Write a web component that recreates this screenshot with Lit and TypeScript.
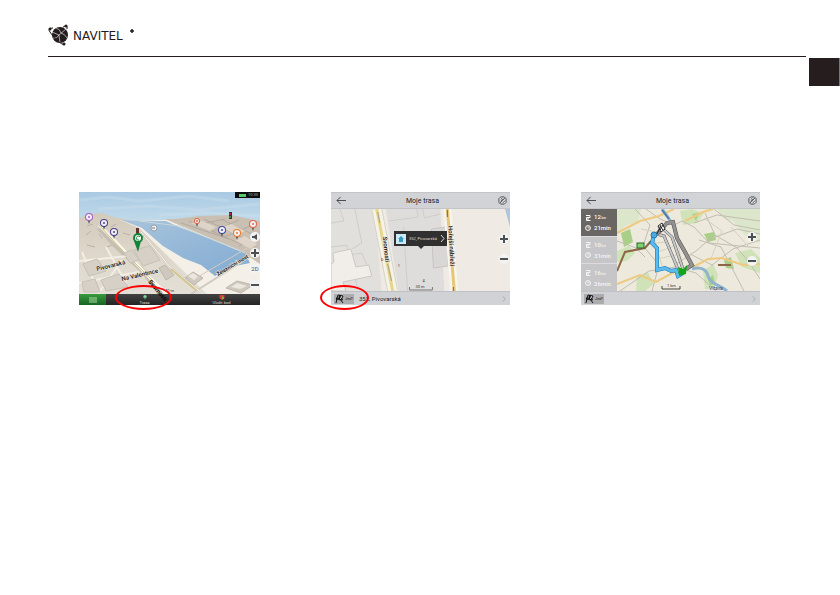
import { LitElement, html, svg, css } from "lit";
import { customElement } from "lit/decorators.js";

const pin = (x: number, y: number, color: string, r = 3) => svg`
  <path d="M${x - 1} ${y + r - 1}L${x} ${y + r + 3}L${x + 1} ${y + r - 1}Z" fill="#333"/>
  <circle cx=${x} cy=${y} r=${r} fill=${color}/>
  <circle cx=${x} cy=${y} r=${r - 1} fill="#f3f0f5"/>
  <path d="M${x - 1} ${y}h2" stroke=${color} stroke-width="1.5"/>`;

const cityMap = svg`
  <svg class="map" viewBox="0 0 181 102" preserveAspectRatio="none" aria-hidden="true">
    <defs>
      <linearGradient id="sky" x2="0" y2="1"><stop stop-color="#a9c9e3"/><stop offset=".6" stop-color="#bfd9e9"/><stop offset="1" stop-color="#dfe9ec"/></linearGradient>
      <linearGradient id="land" x2="0" y2="1"><stop stop-color="#d3cabb"/><stop offset=".6" stop-color="#dfd9cd"/><stop offset="1" stop-color="#e3dfd6"/></linearGradient>
      <linearGradient id="river" x2="1" y2="1"><stop stop-color="#a8c4dc"/><stop offset="1" stop-color="#82abd2"/></linearGradient>
    </defs>
    <rect width="181" height="45" fill="url(#sky)"/>
    <path d="M0 8L30 5L60 9L110 4L150 9M20 17L70 14L120 18L180 12M80 23L130 21L181 24" stroke="#d3e3ed" stroke-width="3" fill="none" opacity=".3"/>
    <path d="M0 26L12 22L23 21L38 26L60 29L181 30V102H0Z" fill="url(#land)"/>
    <path d="M41 28L90 28L100 32L168 58L181 67V102H128L60 36Z" fill="#f4f0e7"/>
    <path d="M86 27L96 27L120 24L152 23L181 29V72L160 58L100 33Z" fill="#c9c0b3"/>
    <path d="M102 31L150 47M110 29L162 52M125 27L172 50M142 27L181 46M117 33L146 27M133 40L160 28M145 45L176 32M160 54L181 42" stroke="#b3a99d" fill="none"/>
    <path d="M112 31L123 29L137 35L131 39ZM142 35L153 32L166 39L157 43ZM156 48L166 44L178 52L171 57Z" fill="#ded5c8"/>
    <path d="M42 28L87 29L100 35L130 46L166 61L171 71L151 75L136 84L122 73L104 66L84 54L63 36Z" fill="url(#river)"/>
    <path d="M60 29L100 34L166 61" stroke="#cad8dc" fill="none"/>
    <path d="M20 36L38 55L63 78L82 102" stroke="#c4bfb3" stroke-width="5" fill="none"/>
    <path d="M20 33L38 51L71 86L88 102" stroke="#faf7eb" stroke-width="3" fill="none"/>
    <path d="M20 33L43 58L76 91" stroke="#cfbd86" fill="none"/>
    <path d="M62 40L91 75L124 102M112 102L169 66L181 60" stroke="#d0cbc0" stroke-width="2" fill="none"/>
    <path d="M62 40L91 75L124 102" stroke="#faf6ec" fill="none"/>
    <path d="M92 77L117 98" stroke="#d4c58f" stroke-width="2" fill="none"/>
    <path d="M0 69L50 64M0 91L60 80M3 60L20 102M27 55L47 91M43 68L19 102" stroke="#f2eee4" stroke-width="2" fill="none"/>
    <path d="M4 72L18 67L27 79L10 84ZM22 88L40 82L49 95L27 99ZM3 90L16 87L21 100H5ZM55 58L71 54L81 68L64 74ZM45 61L53 58L60 68L51 71Z" fill="#d6d0c7" stroke="#c6c0b6"/>
    <path d="M106 86L114 80L124 86L115 93ZM147 96L158 89L174 93L162 101ZM80 76L86 73L95 83L87 88Z" fill="#cfc8be" stroke="#bdb7ad"/>
    <path d="M109 84L114 81L120 85L115 88ZM152 95L158 91L168 94L161 97Z" fill="#ece7dc"/>
    <path d="M7 43l5-4M20 42l3 4M32 35l5-3M8 53l8 2M28 55l5-2M44 41l7 2M60 46l5-2M8 34l6-2" stroke="#bbb2a6" fill="none"/>
    <path d="M117 86L170 55" stroke="#d0cbc1" fill="none"/>
    ${pin(10, 25, "#a65bc8", 4)}
    ${pin(25, 31, "#49408d", 4)}
    ${pin(35, 40, "#49408d", 4)}
    <circle cx="75" cy="36" r="3" fill="#eef2f3" stroke="#98a0a6"/>
    <path d="M73 36h3" stroke="#777"/>
    ${pin(118, 29, "#df6946")}
    ${pin(143, 38, "#3c4ba0", 4)}
    ${pin(158, 41, "#ed7a24", 4)}
    ${pin(174, 32, "#e5674b", 4)}
    <rect x="150" y="20" width="3" height="7" fill="#333"/><circle cx="151" cy="22" r="1" fill="#d24"/><circle cx="151" cy="25" r="1" fill="#3a4"/>
    <rect x="57" y="36" width="3" height="7" fill="#61352c"/>
    <path d="M55 49L59 60L62 49Z" fill="#15833c"/><circle cx="59" cy="46" r="5" fill="#15833c"/><circle cx="59" cy="46" r="3" fill="#fff"/><path d="M61 45A2 2 0 1 0 60 48" fill="none" stroke="#15833c"/>
    <g class="street">
      <text transform="translate(18 79) rotate(-14)">Pivovarská</text>
      <text transform="translate(43 89) rotate(-13)">Na Valentince</text>
      <text class="narrow" transform="translate(139 84) rotate(-31)">Železniční most</text>
    </g>
    <text class="scale" x="86" y="100">40 m</text>
  </svg>`;

const streetMap = svg`
  <svg class="map" viewBox="0 0 180 82" preserveAspectRatio="none" aria-hidden="true">
    <rect width="180" height="82" fill="#efebe4"/>
    <path d="M0 0H44L51 82H0Z" fill="#e2e0dc"/>
    <path d="M55 0H110L114 82H68Z" fill="#dedddb"/>
    <path d="M0 14L13 12L9 0M24 0L31 34L21 40M0 38L16 36L18 46L31 44L38 61L23 64L27 80M58 12L88 8L86 0M92 0L94 9L110 5M73 18L77 82" fill="none" stroke="#cfcdc9"/>
    <path d="M0 55L3 53L2 44L20 40L25 58L38 56L41 67L12 73L15 82H0Z" fill="#f1eeea" stroke="#cbc8c4"/>
    <path d="M101 20L116 18L118 57L103 59Z" fill="#d8d7d5" stroke="#c6c5c3"/>
    <path d="M46 0L62 82" stroke="#d7d3c9" stroke-width="11"/>
    <path d="M46 0L62 82" stroke="#f5f2e6" stroke-width="9"/>
    <path d="M46 0L62 82" stroke="#e6d58a" stroke-width="3"/>
    <path d="M47 3L49 14M57 55L61 72" stroke="#aaa38c"/>
    <path d="M117 0L124 82" stroke="#f8f5ec" stroke-width="8"/>
    <path d="M117 0L124 82" stroke="#e8c578" stroke-width="3"/>
    <path d="M117 1v7M123 78v4" stroke="#706956"/>
    <path d="M175 0H180V18Z" fill="#adc5df"/>
    <g class="street">
      <text transform="translate(52 28) rotate(84)">Svornosti</text>
      <text transform="translate(118 17) rotate(87)">Hořejší nábřeží</text>
    </g>
    <g class="scale"><text x="85" y="79">30 m</text><text x="92" y="73">4</text><text x="67" y="58">1</text><text x="50" y="52">D</text></g>
    <path d="M79 78V81H102V78" fill="none" stroke="#777"/>
  </svg>`;

const routeMap = svg`
  <svg class="map" viewBox="0 0 143 82" preserveAspectRatio="none" aria-hidden="true">
    <rect width="143" height="82" fill="#edeadd"/>
    <path d="M0 0H24L21 12L8 17L0 24ZM100 0H143V34L128 26L116 12L107 9Z" fill="#dbe6cb"/>
    <path d="M63 2L75 0L87 4L80 14L66 16ZM0 42L12 37L18 44L10 52L0 53ZM86 62L96 55L101 66L97 80H88ZM118 44L134 40L143 49V64L125 58ZM20 67L31 63L37 75L28 82H19Z" fill="#cfe2b8"/>
    <path d="M4 24L13 20L16 33L7 38ZM75 5L82 4L79 12ZM87 25L97 23L99 31L91 33ZM91 70L96 66L98 74L93 77ZM107 51L114 48L117 60L109 59Z" fill="#a9cf88"/>
    <path d="M29 0L43 10L57 16L65 12L77 18L92 34L143 39M77 14L100 6L143 12M59 55L79 42L93 30L120 20L143 25M82 31L104 38L127 82M73 45L95 56L116 40L143 31M88 4L98 26L120 39L132 53L143 70M97 0L117 16L143 21M18 0L33 16L26 37L42 56L35 82M0 32L19 39L28 48M3 82L32 62L58 58L79 64L99 82" fill="none" stroke="#c2bdb0"/>
    <path d="M24 20L44 24M30 35L50 33M38 44L60 36M40 50L63 45M36 25L45 57M48 25L58 57M59 26L66 58M105 22L93 52M114 18L131 37M87 9L105 22" fill="none" stroke="#d6d1bf"/>
    <path d="M0 24L23 12L42 7L57 0M0 75L23 66L39 73L59 62M68 12L86 3L96 0M76 58L91 50L105 49L126 56L143 55" fill="none" stroke="#eeca80" stroke-width="2"/>
    <path d="M45 0C51 7 52 12 57 16M75 60C80 58 89 58 91 67C94 76 102 75 110 82" fill="none" stroke="#91b4cd" stroke-width="3"/>
    <path d="M45 1L52 10" stroke="#4f7ca5" stroke-width="2"/>
    <path d="M0 62L8 43L28 39L34 32M101 56H114" fill="none" stroke="#8e6647" stroke-width="2"/>
    <path d="M40 25L47 27L61 60M45 19L55 28L66 60" fill="none" stroke="#5c5c60" stroke-width="3"/>
    <path d="M40 25L47 27L61 60M45 19L55 28L66 60" fill="none" stroke="#c9c8ca" stroke-width="2"/>
    <path d="M40 25L50 14L56 13L60 29L68 43L75 56L69 60" fill="none" stroke="#505052" stroke-width="4"/>
    <path d="M40 25L50 14L56 13L60 29L68 43L75 56L69 60" fill="none" stroke="#92918f" stroke-width="3"/>
    <path d="M37 26L35 34L40 39V61L48 59L54 62L59 61L61 67L66 64" fill="none" stroke="#1771aa" stroke-width="4"/>
    <path d="M37 26L35 34L40 39V61L48 59L54 62L59 61L61 67L66 64" fill="none" stroke="#59bbf0" stroke-width="3"/>
    <circle cx="37" cy="26" r="3" fill="#4ca9df" stroke="#277bb0"/>
    <rect x="20" y="34" width="7" height="5" fill="#84cf74" stroke="#246a2a"/>
    <path d="M41 17L45 14L48 20L44 23Z" fill="#fff" stroke="#222"/><path d="M43 17L46 21M46 16L43 21M40 25L44 16" stroke="#222"/>
    <path d="M61 58L66 60L70 56L69 65L62 67Z" fill="#14a51b"/>
    <path d="M45 77V80H63V77" fill="none" stroke="#444"/>
    <g class="scale"><text x="50" y="78">1 km</text><text class="place" x="92" y="81">Vltava</text></g>
  </svg>`;

const back = svg`<svg viewBox="0 0 12 10"><path d="M11 5H1M5 1L1 5L5 9" fill="none" stroke="#3d3e42"/></svg>`;
const orient = svg`<svg viewBox="0 0 10 10"><path d="M3 1H7L9 3V7L7 9H3L1 7V3Z" fill="#ddd" stroke="#4b4c50"/><path d="M2 8L8 2M3 4L5 2M5 8L8 5M3 6L6 3" stroke="#55565a"/></svg>`;
const flag = svg`<svg viewBox="0 0 9 10"><path d="M1 9L3 1L8 2L6 6L2 5M5 5L8 9" fill="#ddd" stroke="#111"/><path d="M4 1L3 5H5L6 2ZM1 3L3 5L1 6ZM6 4L8 5L7 7Z" fill="#111"/></svg>`;
const next = svg`<svg viewBox="0 0 6 10"><path d="M1 1L5 5L1 9" fill="none" stroke="#96989c"/></svg>`;

@customElement("app-root")
export class AppRoot extends LitElement {
  static styles = css`
    :host { display: block; min-height: 100vh; font-family: Roboto, "Open Sans", sans-serif; color: #222; background: #fff; }
    * { box-sizing: border-box; }
    button { border: 0; padding: 0; margin: 0; background: none; color: inherit; font: inherit; display: flex; align-items: center; justify-content: center; }
    svg { display: block; }
    .page { position: relative; }
    header { margin: 0 34px 0 48px; padding-top: 24px; height: 57px; border-bottom: 1px solid #231b1c; }
    .brand { display: block; width: 88px; }
    .brand text { font: 12px "DejaVu Sans", sans-serif; fill: #231b1c; }
    .tab { position: absolute; right: 0; top: 58px; width: 31px; height: 28px; background: #261d1e; border-right: 1px solid #777; }
    main { display: grid; grid-template-columns: 181fr 179fr 179fr; gap: 71px; padding: 135px 80px 40px 79px; }
    .screen { position: relative; display: flex; flex-direction: column; height: 113px; background: #d1d2d5; }
    .view { position: relative; flex: 1; min-height: 0; overflow: hidden; }
    .map { width: 100%; height: 100%; }
    .street { font: 500 6px Roboto, sans-serif; fill: #111; paint-order: stroke; stroke: #eeeae0; stroke-width: 1px; }
    .narrow { font-size: 5px; font-weight: 700; }
    .scale { font: 4px Roboto, sans-serif; fill: #333; }
    .place { font-size: 5px; fill: #254a7b; }
    .bar { display: grid; grid-template-columns: 20px 1fr 16px; align-items: center; height: 17px; background: #d2d3d6; border: solid #c3c4c8; border-width: 1px 0; }
    h2 { margin: 0; text-align: center; font: 400 7px Roboto, sans-serif; color: #222226; }
    .bar svg { width: 11px; height: 9px; }
    .foot { display: flex; align-items: center; height: 14px; gap: 5px; padding: 0 3px; background: #d1d2d5; border-top: 1px solid #c0c1c5; font-size: 6px; }
    .go { width: 20px; height: 10px; background: #aaacb0; font-size: 4px; gap: 1px; }
    .go svg { width: 9px; height: 10px; }
    .foot .more { margin-left: auto; width: 6px; height: 10px; }
    .more svg { width: 4px; height: 8px; }
    .dock { display: grid; grid-template-columns: 27px 1fr 1fr; height: 11px; background: linear-gradient(#424242, #242424); color: #ddd; font-size: 4px; line-height: 5px; }
    .dock button { flex-direction: column; }
    .dock svg { width: 6px; height: 5px; }
    .dock .menu { background: linear-gradient(#389a3d, #176524); }
    .dock .menu svg { width: 8px; height: 6px; }
    .status { position: absolute; right: 0; top: 0; width: 25px; height: 6px; background: #0c0e0d; color: #aaa; font-size: 4px; line-height: 6px; display: flex; justify-content: space-between; padding: 0 2px 0 4px; align-items: center; }
    .battery { width: 7px; height: 3px; background: #55c86a; }
    .zoom { position: absolute; display: flex; flex-direction: column; }
    .zoom.city { right: 0; top: 40px; gap: 6px; }
    .zoom.pair { right: 1px; top: 25px; gap: 10px; }
    .zoom.low { right: 3px; top: 23px; gap: 14px; }
    .zoom button { width: 10px; height: 10px; border-radius: 5px; background: #f2f3f3; color: #4d5053; font-size: 6px; line-height: 10px; }
    .zoom svg { width: 8px; height: 8px; }
    .ring { position: absolute; border: 2px solid #f00; border-radius: 50%; pointer-events: none; z-index: 1; }
    .ring.route { left: 36px; top: 93px; width: 57px; height: 25px; }
    .ring.start { left: -11px; top: 93px; width: 49px; height: 25px; }
    .over { position: absolute; left: 68px; top: 85px; width: 26px; height: 28px; }
    .over text { font: 700 6px Roboto, sans-serif; fill: #050505; }
    .callout { position: absolute; left: 63px; top: 22px; width: 53px; height: 15px; background: #303030; color: #ddd; display: flex; align-items: center; gap: 3px; padding: 0 2px; font-size: 4px; white-space: nowrap; }
    .callout::after { content: ""; position: absolute; left: 24px; top: 15px; border: solid transparent; border-width: 3px 3px 0; border-top-color: #303030; }
    .home { width: 10px; height: 10px; }
    .callout .arrow { margin-left: auto; width: 5px; height: 9px; }
    .split { flex: 1; min-height: 0; display: grid; grid-template-columns: 36px 1fr; }
    .routes { display: grid; grid-template-rows: repeat(3, 1fr); gap: 1px; background: #dcdcde; }
    .routes button { flex-direction: column; align-items: flex-start; gap: 2px; padding-left: 4px; background: #c6c6c8; color: #f4f4f4; font-size: 6px; line-height: 7px; font-weight: 500; }
    .routes .on { background: #6a6663; color: #fff; }
    .line { display: flex; align-items: center; gap: 3px; }
    .line svg { width: 6px; height: 6px; }
    .line small { font-size: 3px; }
  `;

  sign(plus: boolean) {
    return html`<svg viewBox="0 0 8 8"><path d=${plus ? "M0 4H8M4 0V8" : "M0 4H8"} stroke="#4d5053" stroke-width="2"/></svg>`;
  }

  zoomKeys(kind: string) {
    return html`<div class="zoom ${kind}">
      ${kind === "city" ? html`<button aria-label="Sound"><svg viewBox="0 0 8 8"><path d="M1 3H3L6 1V7L3 5H1Z" fill="#4d5053"/></svg></button>` : ""}
      <button aria-label="Zoom in">${this.sign(true)}</button>
      ${kind === "city" ? html`<button>2D</button>` : ""}
      <button aria-label="Zoom out">${this.sign(false)}</button>
    </div>`;
  }

  titleBar() {
    return html`<div class="bar"><button aria-label="Back">${back}</button><h2>Moje trasa</h2><button aria-label="Orientation">${orient}</button></div>`;
  }

  foot(text: string) {
    return html`<div class="foot"><button class="go">${flag}Jeď!</button><span>${text}</span><button class="more" aria-label="More">${next}</button></div>`;
  }

  route(km: string, min: string, on: boolean) {
    return html`<button class=${on ? "on" : ""}>
      <span class="line"><svg viewBox="0 0 6 6"><path d="M1 .5H5V2.5H1.5V5.5H5.5M1 4H4" fill="none" stroke="currentColor"/></svg><span>${km}<small> km</small></span></span>
      <span class="line"><svg viewBox="0 0 6 6"><circle cx="3" cy="3" r="2.4" fill="none" stroke="currentColor"/><path d="M3 1.5V3H4.5" fill="none" stroke="currentColor" stroke-width=".7"/></svg>${min}min</span>
    </button>`;
  }

  render() {
    return html`<div class="page">
      <header>
        <svg class="brand" viewBox="0 0 88 24" role="img" aria-label="Navitel">
          <circle cx="12" cy="11" r="8" fill="#231b1c"/>
          <path d="M4 8L11 11L18 5M11 11L12 19M8 4Q12 5 13 9Q17 10 19 14M5 14Q9 15 11 11" fill="none" stroke="#fff" stroke-width=".6"/>
          <path d="M5 4Q-1 4 2 8Q4 12 11 18Q16 22 17 19M15 3Q20 0 19 5" fill="none" stroke="#231b1c"/>
          <circle cx="2" cy="5" r="1.5" fill="#231b1c"/><circle cx="18" cy="2" r="1.5" fill="#231b1c"/><circle cx="16" cy="20" r="1.5" fill="#231b1c"/>
          <text x="25" y="16">NAVITEL</text>
          <path d="M84 5V9M82 7H86" stroke="#231b1c" stroke-width="1.5"/>
        </svg>
      </header>
      <div class="tab"></div>
      <main>
        <section class="screen">
          <div class="view">${cityMap}
            <div class="status"><span class="battery"></span><span>10:30</span></div>
            ${this.zoomKeys("city")}
          </div>
          <nav class="dock">
            <button class="menu" aria-label="Menu"><svg viewBox="0 0 8 6"><path d="M0 1H8M0 3H8M0 5H8" stroke="#a9dba5"/></svg></button>
            <button><svg viewBox="0 0 6 6"><circle cx="3" cy="2" r="2" fill="#8bd19b"/><path d="M2 3L3 6L4 3Z" fill="#36a952"/></svg>Trasa</button>
            <button><svg viewBox="0 0 6 6"><path d="M0 0H6V4L3 6L0 4Z" fill="#d93b35"/><path d="M3 2H5V5H3Z" fill="#78bd52"/></svg>Uložit bod</button>
          </nav>
          <svg class="over" viewBox="0 0 26 28" aria-hidden="true"><text transform="translate(1 5) rotate(50)">Svornosti</text></svg>
          <div class="ring route"></div>
        </section>
        <section class="screen">
          ${this.titleBar()}
          <div class="view">${streetMap}
            <div class="callout"><svg class="home" viewBox="0 0 10 10"><rect width="10" height="10" fill="#cceaf5"/><path d="M2 5L5 2L8 5H7V8H3V5Z" fill="#3898be"/></svg>352, Pivovarská<svg class="arrow" viewBox="0 0 5 9"><path d="M1 1L4 4.5L1 8" stroke="#ddd" fill="none"/></svg></div>
            ${this.zoomKeys("pair")}
          </div>
          ${this.foot("352, Pivovarská")}
          <div class="ring start"></div>
        </section>
        <section class="screen">
          ${this.titleBar()}
          <div class="split">
            <div class="routes">${this.route("12", "21", true)}${this.route("10", "31", false)}${this.route("16", "26", false)}</div>
            <div class="view">${routeMap}${this.zoomKeys("low")}</div>
          </div>
          ${this.foot("")}
        </section>
      </main>
    </div>`;
  }
}
